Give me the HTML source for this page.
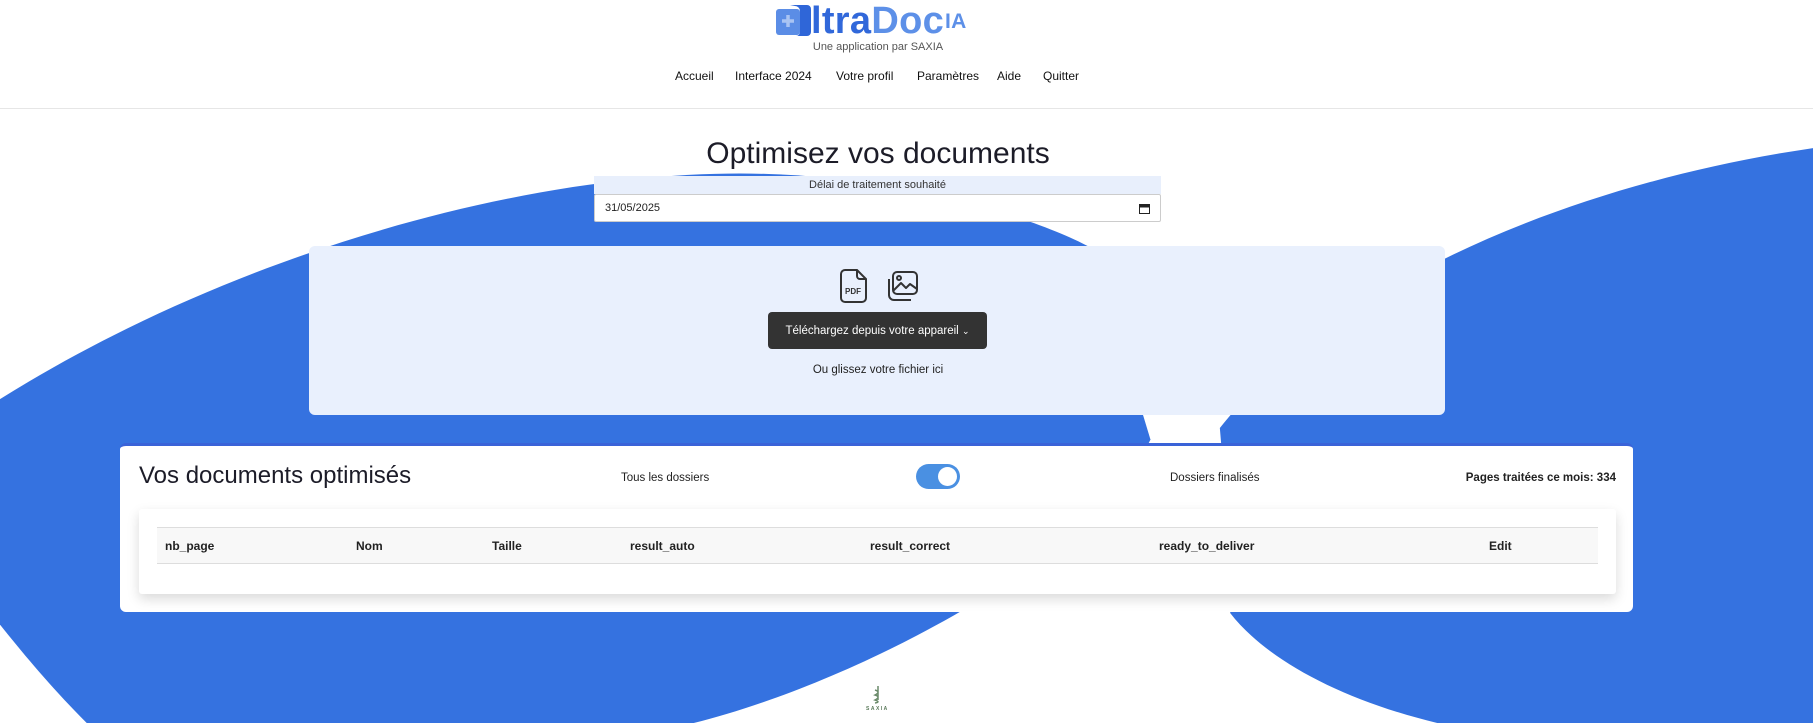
<!DOCTYPE html>
<html><head><meta charset="utf-8"><style>
*{margin:0;padding:0;box-sizing:border-box}
body{width:1813px;height:723px;overflow:hidden;background:#fff;font-family:"Liberation Sans",sans-serif;color:#222;position:relative}
.abs{position:absolute}
svg.bg{position:absolute;left:0;top:0}
.nav a{position:absolute;top:69px;font-size:12px;color:#111;text-decoration:none}
.th{position:absolute;top:539px;font-size:12px;font-weight:bold;color:#222}
</style></head><body>
<svg class="bg" width="1813" height="723" viewBox="0 0 1568 625" preserveAspectRatio="none">
<path fill="#3572e0" d="M0,345 C200,220 450,150 640,150 C780,150 900,190 945,215 L995,380 C960,450 880,500 825,532 C740,580 660,610 600,625 L75,625 C45,595 20,565 0,540 Z"/>
<path fill="#3572e0" d="M1055,370 C1150,250 1350,160 1568,128 L1568,625 L1243,625 C1160,605 1095,570 1064,530 L1060,430 Z"/>
</svg>
<div class="abs" style="left:0;top:0;width:1813px;height:109px;background:#fff;border-bottom:1px solid #e6e6e6"></div>
<svg class="abs" style="left:776px;top:5px" width="36" height="31" viewBox="0 0 36 31">
<rect x="0" y="4" width="24" height="26" rx="3" fill="#5b8de6"/>
<path d="M14 0 H31 a4 4 0 0 1 4 4 V27 a4 4 0 0 1 -4 4 H20 a4 4 0 0 0 4 -4 V6 a5 5 0 0 0 -5 -5 Z" fill="#2f66d8"/>
<path d="M12 10 v12 M6 16 h12" stroke="#a9c4f3" stroke-width="3.5"/>
</svg>
<div class="abs" style="left:811px;top:2px;font-size:38px;font-weight:bold;letter-spacing:0.3px;white-space:nowrap;line-height:38px"><span style="color:#3168da">ltra</span><span style="color:#5d90e8">Doc</span><span style="font-size:21px;color:#5d90e8;vertical-align:top;position:relative;top:1px;margin-left:1px">IA</span></div>
<div class="abs" style="left:0;width:1756px;top:41px;text-align:center;font-size:11px;color:#555">Une application par SAXIA</div>
<div class="nav"><a style="left:675px">Accueil</a><a style="left:735px">Interface 2024</a><a style="left:836px">Votre profil</a><a style="left:917px">Paramètres</a><a style="left:997px">Aide</a><a style="left:1043px">Quitter</a></div>
<div class="abs" style="left:0;width:1756px;top:137px;text-align:center;font-size:30px;color:#1c1c28">Optimisez vos documents</div>
<div class="abs" style="left:594px;top:176px;width:567px;height:18px;background:#e8effc;text-align:center;font-size:11px;line-height:18px;color:#333">Délai de traitement souhaité</div>
<div class="abs" style="left:594px;top:194px;width:567px;height:28px;background:#fff;border:1px solid #ccc;border-radius:2px;font-size:11px;line-height:26px;padding-left:10px;color:#222">31/05/2025
<svg class="abs" style="right:10px;top:8px" width="11" height="11" viewBox="0 0 11 11"><rect x="0.5" y="1.5" width="10" height="9" fill="none" stroke="#222"/><rect x="0.5" y="1.5" width="10" height="3" fill="#222"/></svg></div>
<div class="abs" style="left:309px;top:246px;width:1136px;height:169px;background:#e9f0fd;border-radius:6px"></div>
<svg class="abs" style="left:840px;top:269px" width="28" height="34" viewBox="0 0 28 34" fill="none" stroke="#333" stroke-width="2"><path d="M5 1 H17 L26 10 V29 a4 4 0 0 1 -4 4 H5 a4 4 0 0 1 -4 -4 V5 a4 4 0 0 1 4 -4 Z M17 1 V7 a3 3 0 0 0 3 3 H26"/><text x="5" y="25" font-size="8" font-weight="bold" fill="#333" stroke="none" font-family="Liberation Sans">PDF</text></svg>
<svg class="abs" style="left:885px;top:271px" width="34" height="31" viewBox="0 0 34 31" fill="none" stroke="#333" stroke-width="2" stroke-linejoin="round"><rect x="8" y="1" width="24" height="22" rx="4"/><path d="M4 8 V24 a5 5 0 0 0 5 5 H26"/><circle cx="14" cy="7" r="2"/><path d="M8 20 L16 12 L21 17 L25 13 L32 18"/></svg>
<div class="abs" style="left:768px;top:312px;width:219px;height:37px;background:#333;border-radius:4px;color:#fff;font-size:11.5px;text-align:center;line-height:38px">Téléchargez depuis votre appareil <span style="font-size:9px">⌄</span></div>
<div class="abs" style="left:0;width:1756px;top:364px;text-align:center;font-size:11.5px;color:#222">Ou glissez votre fichier ici</div>
<div class="abs" style="left:120px;top:443px;width:1513px;height:169px;background:#fff;border-radius:6px;border-top:3px solid #3a63d8"></div>
<div class="abs" style="left:139px;top:462px;font-size:24px;color:#1c1c28">Vos documents optimisés</div>
<div class="abs" style="left:621px;top:472px;font-size:11.5px;color:#222">Tous les dossiers</div>
<div class="abs" style="left:916px;top:464px;width:44px;height:25px;border-radius:13px;background:#4a90e2"><div class="abs" style="right:3px;top:3px;width:19px;height:19px;border-radius:50%;background:#fff"></div></div>
<div class="abs" style="left:1170px;top:472px;font-size:11.5px;color:#222">Dossiers finalisés</div>
<div class="abs" style="right:197px;top:472px;font-size:11.5px;font-weight:bold;color:#222">Pages traitées ce mois: 334</div>
<div class="abs" style="left:139px;top:509px;width:1477px;height:85px;background:#fff;box-shadow:0 5px 12px rgba(0,0,0,0.15);border-radius:3px"></div>
<div class="abs" style="left:157px;top:527px;width:1441px;height:37px;background:#f8f8f8;border-top:1px solid #ddd;border-bottom:1px solid #ddd"></div>
<div class="th" style="left:165px">nb_page</div><div class="th" style="left:356px">Nom</div><div class="th" style="left:492px">Taille</div><div class="th" style="left:630px">result_auto</div><div class="th" style="left:870px">result_correct</div><div class="th" style="left:1159px">ready_to_deliver</div><div class="th" style="left:1489px">Edit</div>
<svg class="abs" style="left:864px;top:684px" width="28" height="28" viewBox="0 0 28 28"><path d="M14 2 V16 M11 6 q6 2 0 5 q6 2 0 5 q6 2 0 3" stroke="#6a8a6a" stroke-width="1.5" fill="none"/><text x="2" y="26" font-size="5" font-weight="bold" fill="#5a7a5a" font-family="Liberation Sans" letter-spacing="1.5">SAXIA</text></svg>
</body></html>
